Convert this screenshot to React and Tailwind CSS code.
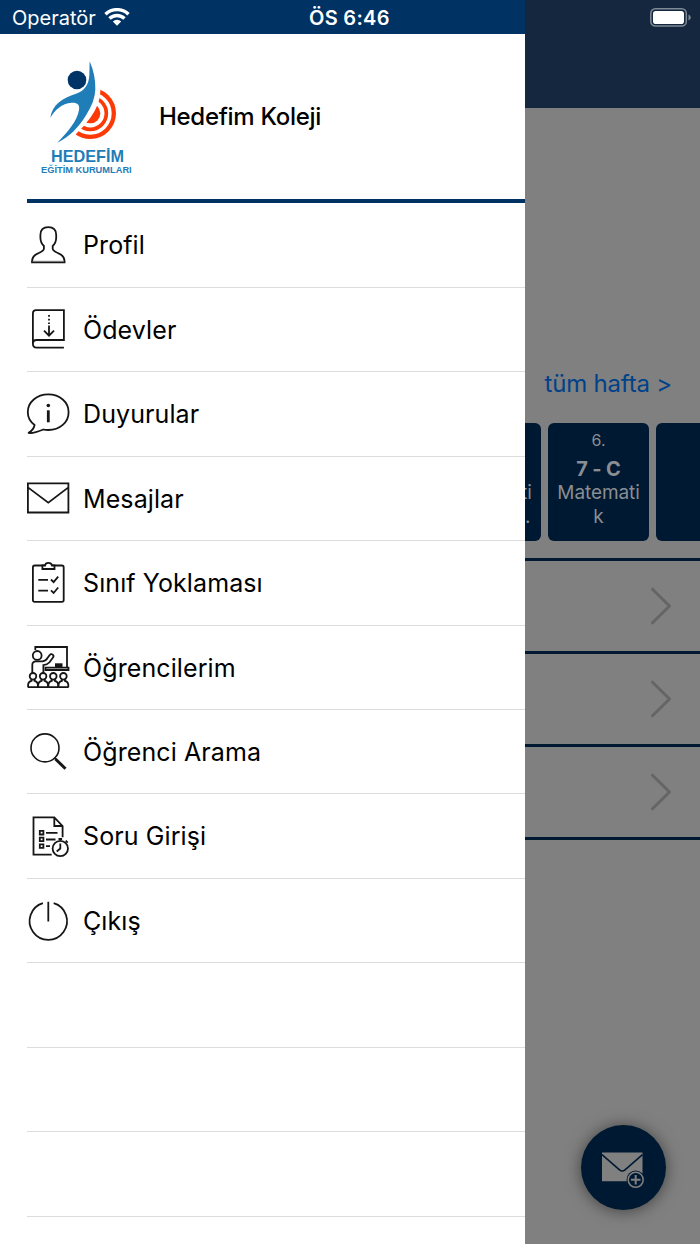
import React from 'react'

const Icon = ({ children }) => (
  <svg viewBox="0 0 42 42" className="w-[42px] h-[42px] shrink-0 overflow-visible" fill="none" stroke="#161616" strokeWidth="1.8">
    {children}
  </svg>
)

const ProfileIcon = () => (
  <Icon>
    <path d="M5 38.300H37.600C37.800 33.500 35.500 31 31.500 29.300C28.500 28 25.700 27 25.700 24.800V22C28 19.800 29.200 17.500 29.200 13.500V11C29.200 6 26.200 3.200 21.300 3.200S13.400 6 13.400 11V13.500C13.400 17.500 14.600 19.800 16.900 22V24.800C16.900 27 14.100 28 11.100 29.300C7.100 31 4.800 33.500 5 38.300Z" />
    <path d="M5.500 37.300h31.500" strokeWidth="1" stroke="#777" />
  </Icon>
)

const HomeworkIcon = () => (
  <Icon>
    <path d="M5.900 36V5.500Q5.900 2.200 9.200 2.200H36.900V32H9.500Q5.900 32 5.900 35.800Q5.900 39.600 9.500 39.600H36.900" />
    <path d="M22 7v1.700M22 10.700v1.700M22 14.400v1.700M22 17.500v10M17 22.700l5 5l5-5" />
  </Icon>
)

const NoticeIcon = () => (
  <Icon>
    <path d="M7.600 32C3 28.500 .8 24 .8 19.200C.8 9 9.800 1.400 21.300 1.400S41.600 9 41.600 19.200S32.800 37 21.300 37C19.500 37 18 36.900 16.400 36.500C11.800 38.400 5.800 40.700 1.600 39.900C4 38.500 6.800 36 7.600 32Z" strokeLinejoin="round" />
    <circle cx="21.300" cy="12.500" r="1.800" fill="#161616" stroke="none" />
    <path d="M21.300 17.300v12" strokeWidth="2.800" />
  </Icon>
)

const MailIcon = () => (
  <Icon>
    <path d="M.9 6.300h40.500v29.200H.9zM.9 10.400l20.400 15.300l20.100-15.300" />
  </Icon>
)

const ChecklistIcon = () => (
  <Icon>
    <rect x="5.900" y="3.500" width="30.800" height="36.300" rx="1.800" />
    <path d="M15.400 3.500V7H27.500V3.500H25Q24.400 .9 21.400 .9T18 3.500Z" fill="#fff" />
    <path d="M11.300 17.900h9.700M11.300 28.600h9.700M24 17.500l2.600 2.600l4.600-5.500M24 28.400l2.600 2.600l4.600-5.500" />
  </Icon>
)

const StudentsIcon = () => (
  <Icon>
    <circle cx="10.200" cy="9.400" r="4.400" />
    <path d="M8.300 4V1H40V21.500M5.300 27.500V19Q5.300 15.300 9 15.300H15.500Q19 14.800 20.500 12L22.700 9Q24.200 7.300 25.700 8.700T26 11.500L22.500 16.300Q20.600 18.600 16.400 19.100V27.500" />
    <path d="M18.500 21.700H41.500V24H18.500z" />
    <path d="M28 17.300h7.500v4.200H28z" fill="#161616" stroke="none" />
    {[6, 16.100, 26.300, 36.400].map((x) => (
      <g key={x} transform={`translate(${x} 0)`}>
        <circle cy="30.300" r="3.300" />
        <path d="M-4.900 41.200V38.500Q-4.500 35.400-1.500 34.800V33M1.500 33V34.800Q4.500 35.400 4.900 38.500V41.200M-5.200 41.200H5.200" />
      </g>
    ))}
  </Icon>
)

const SearchIcon = () => (
  <Icon>
    <circle cx="18" cy="16.900" r="14" strokeWidth="1.600" />
    <path d="M27.500 26.900l1.500 1.500" />
    <path d="M28.500 28l10 9.800" strokeWidth="3" />
  </Icon>
)

const QuestionIcon = () => (
  <Icon>
    <path d="M24.700 39.700H6.500V2.400H27.300L35.600 11V22.300M27.300 2.400V11H35.600" />
    <path d="M12.800 15.900h3.600v3.600h-3.600zM12.800 22.600h3.600v3.600h-3.600zM12.800 29.300h3.600v3.600h-3.600zM19 17.800h11.500M19 24.500h9.500M19 31.200h4" />
    <circle cx="33.300" cy="33.500" r="7.700" />
    <path d="M33.300 28.500V33.500L29.700 36.500M31.500 24h3.600M38.700 25.600l2 2" />
  </Icon>
)

const PowerIcon = () => (
  <Icon>
    <path d="M15.900 3.200A18.700 18.700 0 1 0 26.700 3.200M21.300 1.800v19.800" />
  </Icon>
)

const menuItems = [
  { label: 'Profil', icon: ProfileIcon },
  { label: 'Ödevler', icon: HomeworkIcon },
  { label: 'Duyurular', icon: NoticeIcon },
  { label: 'Mesajlar', icon: MailIcon },
  { label: 'Sınıf Yoklaması', icon: ChecklistIcon },
  { label: 'Öğrencilerim', icon: StudentsIcon },
  { label: 'Öğrenci Arama', icon: SearchIcon },
  { label: 'Soru Girişi', icon: QuestionIcon },
  { label: 'Çıkış', icon: PowerIcon },
  {},
  {},
  {},
]

const Logo = () => (
  <svg viewBox="0 0 360 390" className="w-[120px] h-[130px] shrink-0">
    <defs>
      <clipPath id="target">
        <path d="M211 100V122Q212 160 180 205Q162 230 136 254V290H280V100Z" />
      </clipPath>
    </defs>
    <g clipPath="url(#target)" fill="none" stroke="#fb3a08">
      <circle cx="181" cy="190" r="70.500" strokeWidth="13" />
      <circle cx="181" cy="190" r="48" strokeWidth="11" />
      <circle cx="181" cy="190" r="30" fill="#fb3a08" stroke="none" />
    </g>
    <path d="M179 34Q197 75 196 118Q195 154 169 194C145 233 120 258 82 278C112 248 142 212 147 180C150 164 142 157 125 158C95 160 75 180 61 203C66 164 98 144 138 131C164 123 177 103 178 75Z" fill="#1f7db8" stroke="#fff" strokeWidth="14" paintOrder="stroke" />
    <circle cx="141" cy="90" r="28" fill="#003366" />
    <text x="63" y="336" textLength="219" lengthAdjust="spacingAndGlyphs" fontSize="49" fontWeight="700" fontFamily="Liberation Sans, sans-serif" fill="#1f7db8">HEDEFİM</text>
    <text x="33" y="369" textLength="272" lengthAdjust="spacingAndGlyphs" fontSize="28" fontWeight="700" fontFamily="Liberation Sans, sans-serif" fill="#1f7db8">EĞİTİM KURUMLARI</text>
  </svg>
)

const Drawer = () => (
  <aside className="w-[525px] shrink-0 bg-white text-black">
    <div className="h-[34px] bg-[#003264] text-white grid grid-cols-[309px_1fr] items-center pt-px">
      <div className="flex items-center pl-3 gap-2">
        <span className="text-[20px] leading-none">Operatör</span>
        <svg viewBox="0 0 26 20" className="w-[26px] h-5" fill="none" stroke="#fff" strokeWidth="3.400">
          <path d="M1.500 6.300A16.500 16.500 0 0 1 24.500 6.300M5.500 10.500A10.800 10.800 0 0 1 20.500 10.500" />
          <path d="M13 17.700L8.800 13.500A6 6 0 0 1 17.200 13.500Z" fill="#fff" stroke="none" />
        </svg>
      </div>
      <span className="text-[20px] leading-none font-semibold tracking-[0.3px] pt-px">ÖS 6:46</span>
    </div>

    <div className="ml-[27px] h-[169px] border-b-[4px] border-[#003264] flex items-start pt-4 pl-[3px]">
      <Logo />
      <h1 className="ml-[9px] mt-[51px] text-[24px] leading-8 font-medium tracking-[-0.3px]">Hedefim Koleji</h1>
    </div>

    <ul className="ml-[27px] pt-[0.3px]">
      {menuItems.map(({ label, icon: ItemIcon }, index) => (
        <li key={index} className="h-[84.46px] border-b border-[#dcdcdc] flex items-center gap-[14px]">
          {ItemIcon && <ItemIcon />}
          <span className="text-[25px] tracking-[0.1px] pt-[2px]">{label}</span>
        </li>
      ))}
    </ul>
  </aside>
)

const Lesson = ({ hour, group, lines }) => (
  <div className="w-[101px] h-[118px] shrink-0 rounded-md bg-[#001932] text-[#8a8d91] text-center pt-[5px]">
    <div className="text-[16px] h-[26px] leading-6">{hour}</div>
    <div className="text-[20px] h-[27px] leading-[30px] font-bold tracking-[-0.2px]">{group}</div>
    {lines.map((line) => (
      <div key={line} className="text-[19px] leading-[23.500px] tracking-[-0.1px]">{line}</div>
    ))}
  </div>
)

const Background = () => (
  <main className="flex-1 min-w-0 bg-[#808080] overflow-hidden relative">
    <header className="h-[108px] bg-[#15273f] flex justify-end pt-2 pr-[9px]">
      <svg viewBox="0 0 41 19" className="w-[41px] h-[19px]">
        <rect x=".8" y=".8" width="35.500" height="17.200" rx="4.500" fill="none" stroke="#7f8995" strokeWidth="1.500" />
        <rect x="3" y="3" width="31" height="13" rx="2.800" fill="#fff" />
        <path d="M38.500 6.500Q40.800 7.500 40.800 9.500T38.500 12.500Z" fill="#7f8995" />
      </svg>
    </header>

    <div className="h-[314px] flex items-end justify-end pr-[28px] pb-[22px]">
      <a href="#hafta" className="text-[24px] leading-8 tracking-[-0.2px] text-[#004289] whitespace-nowrap">tüm hafta &gt;</a>
    </div>

    <div className="flex gap-[7px] pt-[1px]">
      <div className="w-4 h-[118px] shrink-0 rounded-r-md bg-[#001932] text-[#8a8d91] text-[19px] leading-[23.500px] pt-[58px]">
        <div className="-ml-[4px]">ti</div>
        <div>.</div>
      </div>
      <Lesson hour="6." group="7 - C" lines={['Matemati', 'k']} />
      <Lesson lines={[]} />
    </div>

    <div className="mt-[17px] border-t-[3px] border-[#001932]">
      {[0, 1, 2].map((row) => (
        <div key={row} className="h-[93px] border-b-[3px] border-[#001932] flex items-center justify-end pr-[28px]">
          <svg viewBox="0 0 22 38" className="w-[22px] h-[38px]" fill="none" stroke="#656565" strokeWidth="3" strokeLinecap="round" strokeLinejoin="round">
            <path d="M2.500 2.200L19.500 19L2.500 35.800" />
          </svg>
        </div>
      ))}
    </div>

    <button className="absolute left-[56px] bottom-[34px] w-[85px] h-[85px] rounded-full bg-[#001932] shadow-[0_1px_16px_rgba(0,0,0,0.5)]">
      <svg viewBox="0 0 85 85" className="w-[85px] h-[85px]" fill="none">
        <path d="M21 27.500h40.500v28.700H21z" fill="#808080" />
        <path d="M21 29.700L38.500 44.800Q41.300 47.200 44 44.800L61.500 29.700" stroke="#001932" strokeWidth="1.600" />
        <circle cx="54.700" cy="54.800" r="9.200" fill="#001932" />
        <circle cx="54.700" cy="54.800" r="7.500" stroke="#808080" strokeWidth="1.500" />
        <path d="M54.700 50v9.600M49.900 54.800h9.600" stroke="#808080" strokeWidth="2" />
      </svg>
    </button>
  </main>
)

const App = () => {
  return (
    <div className="flex w-[700px] h-[1244px] overflow-hidden font-['Inter',sans-serif]">
      <Drawer />
      <Background />
    </div>
  )
}

export default App
